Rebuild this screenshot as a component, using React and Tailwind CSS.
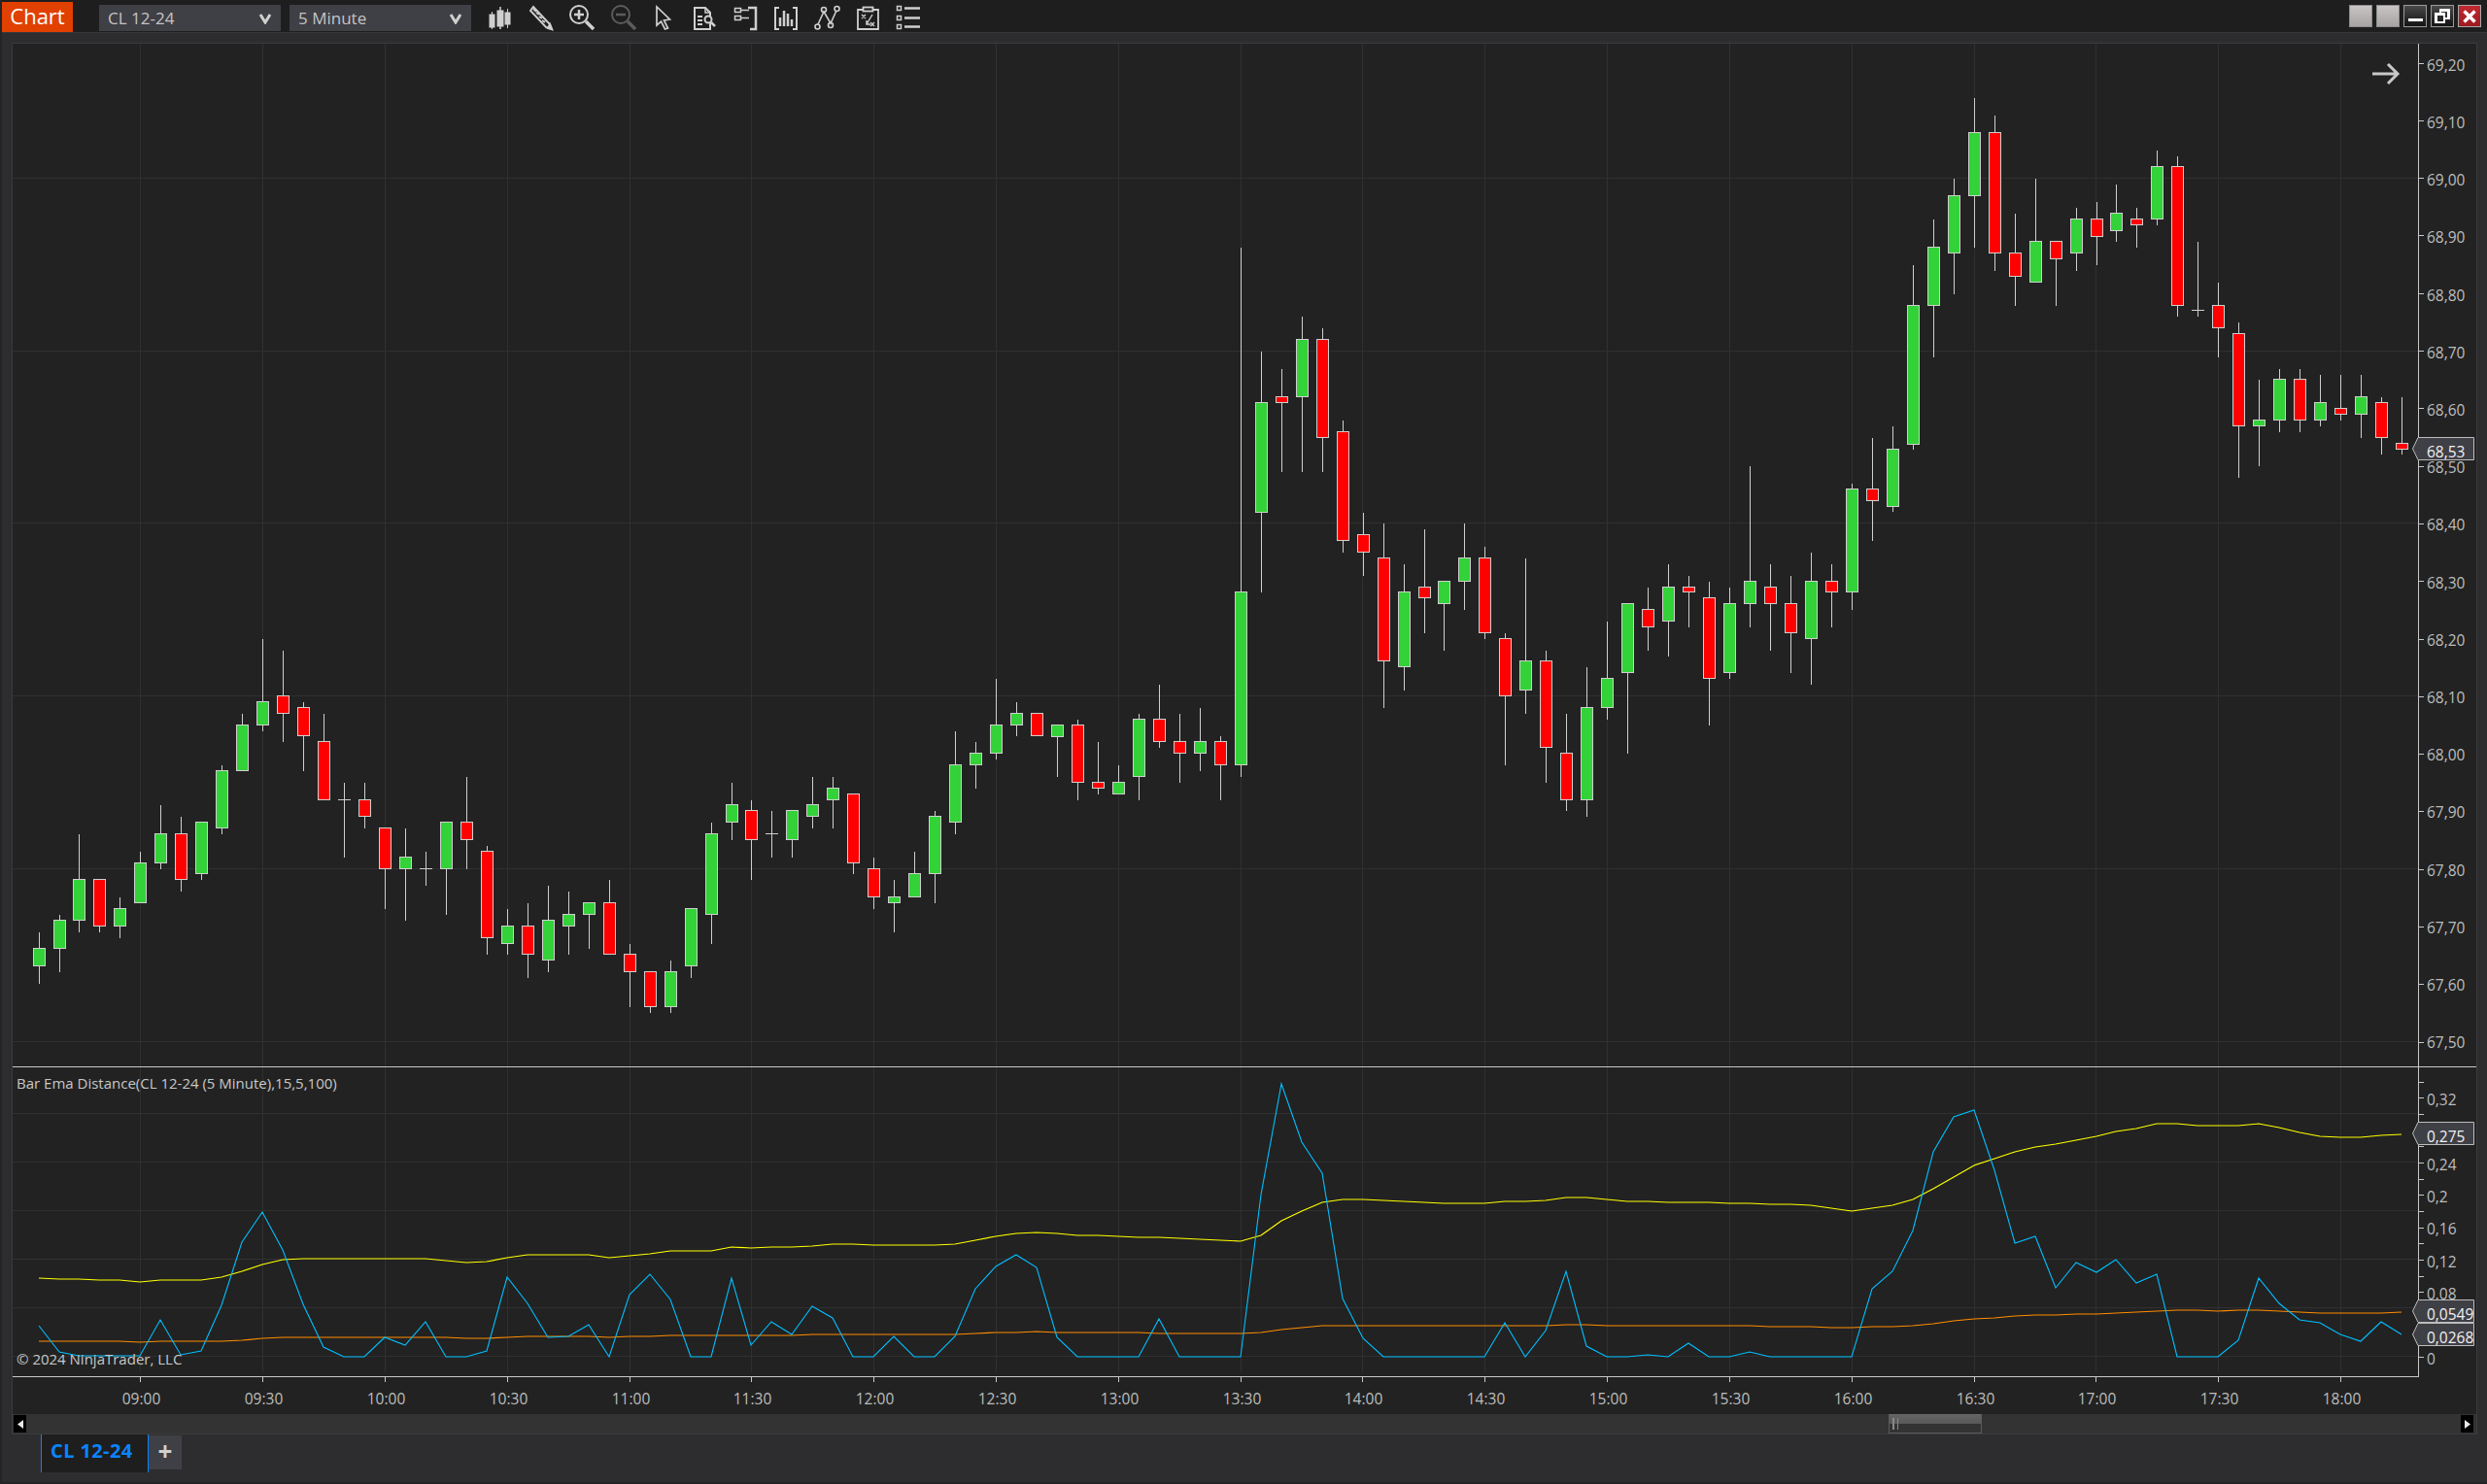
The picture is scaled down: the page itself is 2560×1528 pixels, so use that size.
import React from "react";

const GC = "#cfcfcf";
const A = [
  ["g",960,1009,1063,1118],["g",906,922,1009,1082],["g",657,796,922,960],["r",null,796,940,960],["g",852,886,940,978],
  ["g",711,745,868,null],["g",567,655,745,765],["r",603,655,796,833],["g",null,619,778,797],["g",444,460,637,657],
  ["g",285,319,460,null],["g",54,247,319,338],["r",90,229,283,372],["r",249,265,352,462],["r",285,370,550,null],
  ["d",498,550,550,728],["r",498,550,601,639],["r",null,637,763,887],["g",639,727,763,923],["d",711,763,763,815],
  ["g",null,619,763,905],["r",480,619,673,765],["r",693,709,976,1028],["g",888,940,994,1028],["r",870,940,1027,1100],
  ["g",816,922,1045,1082],["g",834,904,940,1028],["g",null,868,904,1010],["r",798,868,1027,null],["r",996,1027,1081,1190],
  ["r",null,1081,1189,1208],["g",1047,1081,1189,1208],["g",null,886,1063,1100],["g",621,655,904,995],["g",498,565,619,674],
  ["r",552,583,673,797],["d",585,655,655,728],["g",null,583,673,728],["g",480,565,601,638],["g",480,514,550,638],
  ["r",null,532,745,779],["r",729,763,850,887],["g",798,850,868,959],["g",711,778,850,null],["g",585,601,778,869],
  ["g",339,442,619,656],
].map((c) => [c[0], ...c.slice(1).map((v) => (v === null ? null : 640 + v / 3))]);
const B = [
  ["g",1092,1126,1162,1236],["g",897,1039,1126,1145],["g",969,1003,1039,1074],["r",null,1003,1072,null],["g",null,1039,1073,1200],
  ["r",1023,1039,1216,1272],["r",1092,1216,1234,1254],["g",1164,1216,1252,null],["g",1005,1021,1198,1272],["r",915,1021,1090,1110],
  ["r",1005,1090,1126,1218],["g",987,1090,1126,1182],["r",1075,1090,1162,1272],["g",-435,628,1162,1200],["g",-114,43,382,629],
  ["r",-60,25,43,258],["g",-222,-152,25,258],["r",-186,-152,151,258],["r",99,133,469,506],["r",385,451,505,578],
  ["r",417,523,841,987],["g",543,628,859,933],["r",435,613,646,756],["g",null,595,664,810],["g",417,523,595,684],
  ["r",489,523,754,773],["r",756,772,949,1164],["g",525,841,931,1005],["r",810,841,1108,1218],["r",1005,1126,1270,1305],
  ["g",861,985,1270,1323],["g",720,895,985,1023],["g",null,664,877,1128],["r",615,682,736,810],["g",543,613,718,828],
  ["r",579,613,628,738],["r",597,646,895,1041],["g",615,664,877,896],["g",240,595,664,738],["r",543,613,664,810],
  ["r",579,664,754,879],["g",507,595,772,915],["r",543,595,628,738],["g",294,310,628,684],
].map((c) => [c[0], ...c.slice(1).map((v) => (v === null ? null : 400 + v / 3))]);
const C = [
  ["r",1173,1330,1365,1491],["g",1137,1207,1384,1401],["g",639,763,1190,1208],["g",498,583,763,923],["g",372,424,601,728],
  ["g",123,229,424,585],["r",177,229,601,656],["r",480,601,673,765],["g",372,565,691,null],["r",null,565,619,765],
  ["g",462,496,601,656],["r",444,496,550,638],["g",390,478,532,567],["r",462,496,514,585],["g",285,334,496,516],
  ["r",303,334,763,797],["d",567,778,778,797],["r",693,763,832,923],["r",816,850,1135,1296],["g",993,1117,1135,1260],
  ["g",960,991,1117,1155],["r",960,991,1117,1155],["g",978,1063,1117,1136],["r",978,1081,1099,1118],["g",978,1045,1099,1172],
  ["r",1047,1063,1171,1223],["r",1047,1189,1207,1223],
].map((c) => [c[0], ...c.slice(1).map((v) => (v === null ? null : 60 + v / 3))]);
const candles = [...A, ...B, ...C];

const barX = (i) => Math.round(144.4 + 20.97 * (i - 5)) + 0.5;
const crisp = (y) => Math.round(y) + 0.5;

const BLUE = [826,906,917,918,918,919,807,915,903,762,568,474,590,760,890,920,920,862,884,812,920,920,903,675,755,861,858,822,920,730,665,745,920,920,678,884,812,853,764,802,920,920,857,920,920,857,710,643,605,645,861,920,920,920,920,805,920,920,920,920,420,78,258,355,740,865,920,920,920,920,920,920,815,920,840,657,888,920,920,914,920,878,920,920,905,920,920,920,920,920,711,658,530,288,179,158,345,570,548,708,629,660,620,692,665,920,920,920,870,678,757,806,816,852,873,812,853];
const YELLOW = [678,681,681,684,684,690,684,684,684,674,658,636,622,618,618,618,618,618,618,618,624,630,627,614,605,605,605,605,615,609,602,594,594,594,581,584,581,581,578,572,572,575,575,575,575,572,560,548,540,537,540,545,545,548,551,552,555,558,561,564,545,500,470,443,435,435,438,441,444,447,447,447,441,441,438,428,428,435,441,441,444,444,444,447,447,450,450,453,461,470,461,453,434,403,367,329,308,288,273,264,252,240,225,216,201,201,207,207,207,201,213,228,240,243,243,237,234];
const ORANGE = [873,873,873,873,873,876,873,873,873,873,870,864,861,861,861,861,861,861,861,861,861,864,864,861,858,858,858,858,861,858,858,855,855,855,855,855,855,855,852,852,852,852,852,852,852,852,849,846,846,843,846,846,846,846,846,849,849,849,849,849,846,837,831,825,825,825,825,825,825,825,825,825,825,825,825,822,822,825,825,825,825,825,825,825,825,828,828,828,831,831,829,828,825,819,810,804,800,795,793,791,789,789,786,783,780,777,777,780,777,777,779,782,786,786,786,786,783];
const path = (arr) => arr.map((v, i) => `${barX(i) - 0.5},${Math.round(1090 + v / 3)}`).join(" ");

const gridX = [144,270,396,522,648,773,899,1025,1151,1277,1402,1528,1654,1780,1906,2032,2157,2283,2409].map((x) => x + 0.5);
const times = ["09:00","09:30","10:00","10:30","11:00","11:30","12:00","12:30","13:00","13:30","14:00","14:30","15:00","15:30","16:00","16:30","17:00","17:30","18:00"];
const upperGrid = [183.5,361.5,538.5,716.5,894.5,1072.5];
const lowerGrid = [1146.5,1196.5,1246.5,1296.5,1346.5,1396.5];
const prices = ["69,20","69,10","69,00","68,90","68,80","68,70","68,60","68,50","68,40","68,30","68,20","68,10","68,00","67,90","67,80","67,70","67,60","67,50"];
const lowerLabels = [["0,32",1130],["0,24",1197],["0,2",1230],["0,16",1263],["0,12",1297],["0,08",1330],["0",1397]];
const lowerTicks = Array.from({ length: 18 }, (_, k) => 1113.5 + k * 16.67);

const FONT = "font-['Open_Sans','Noto_Sans',sans-serif]";

function Candle({ c, i }) {
  const x = barX(i);
  const [t, wt, bt, bb, wb] = c;
  const top = crisp(bt);
  const bot = crisp(bb);
  return (
    <g shapeRendering="crispEdges">
      {wt !== null && <line x1={x} x2={x} y1={Math.round(wt)} y2={top} stroke={GC} />}
      {wb !== null && <line x1={x} x2={x} y1={bot} y2={Math.round(wb)} stroke={GC} />}
      {t === "d" ? (
        <line x1={x - 6.5} x2={x + 6.5} y1={top} y2={top} stroke={GC} />
      ) : (
        <rect x={x - 6} y={top} width={12} height={Math.max(bot - top, 1)} fill={t === "g" ? "#32d238" : "#ff0000"} stroke={GC} />
      )}
    </g>
  );
}

function Tag({ top, text, w = 64 }) {
  const h = 24;
  const x0 = 2483;
  const mid = top + h / 2;
  const y1 = top + 0.5;
  const y2 = top + h - 0.5;
  const right = x0 + w - 0.5;
  return (
    <g>
      <polygon points={`${x0 + 0.5},${mid} ${x0 + 6},${y1} ${right},${y1} ${right},${y2} ${x0 + 6},${y2}`} fill="#3f3f46" stroke="#bdbdbd" />
      <text x={2498} y={mid + 8.5} className={`${FONT} text-[15.5px] fill-[#f0f0f0]`}>{text}</text>
    </g>
  );
}

const ICON = "#cfcfcf";
const icons = [
  <g key="a" fill={ICON} stroke={ICON} transform="translate(-3 0)">
    <line x1="15.5" x2="15.5" y1="12" y2="30" /><rect x="13" y="15" width="5" height="13" />
    <line x1="24" x2="24" y1="7" y2="30" strokeWidth="1.5" /><rect x="21" y="11" width="6" height="16" />
    <line x1="31.5" x2="31.5" y1="9" y2="29" /><rect x="29" y="13" width="5" height="12" />
  </g>,
  <g key="b" fill="none" stroke={ICON} strokeWidth="2">
    <path d="M10 11 L13 7 L30 25 L32 30 L26 28 Z" />
    <path d="M13 9 L16 12 M16 13 L19 15 M19 17 L22 19 M22 21 L25 23" />
    <path d="M28 29 L32 30 L30 25 Z" fill={ICON} />
  </g>,
  <g key="c" fill="none" stroke={ICON} strokeWidth="2">
    <circle cx="18" cy="15" r="9" />
    <path d="M13 15 H23 M18 10 V20" strokeWidth="2.5" />
    <path d="M25 22 L33 30" strokeWidth="3.5" />
  </g>,
  <g key="d" fill="none" stroke="#5c5c5c" strokeWidth="2">
    <circle cx="19" cy="15" r="9" />
    <path d="M14 15 H24" strokeWidth="2.5" />
    <path d="M26 22 L34 30" strokeWidth="3.5" />
  </g>,
  <g key="e" fill="none" stroke={ICON} strokeWidth="1.7">
    <path d="M14 7 L14 26 L18.5 22 L22.5 30 L25.5 29 L21.5 21 L27.5 20 Z" />
  </g>,
  <g key="f" fill="none" stroke={ICON} strokeWidth="2">
    <path d="M11 8 H22 L27 13 V30 H11 Z" />
    <path d="M22 8 V13 H27" strokeWidth="1.5" />
    <path d="M14 17 H19 M14 21 H19 M14 25 H19" />
    <circle cx="25" cy="20" r="3.5" fill="#1e1e1e" />
    <path d="M28 23 L32 27" strokeWidth="2.5" />
  </g>,
  <g key="g" fill="none" stroke={ICON} strokeWidth="2">
    <rect x="10.5" y="8.5" width="6" height="4" strokeWidth="1.5" />
    <rect x="10.5" y="16.5" width="6" height="4" strokeWidth="1.5" />
    <path d="M16 10.5 H25 M16 18.5 H25" strokeWidth="1.5" />
    <path d="M24 8 H32 V30 H26" strokeWidth="2.5" />
  </g>,
  <g key="h" fill="none" stroke={ICON} strokeWidth="2">
    <path d="M14 8 H10 V30 H14 M28 8 H32 V30 H28" />
    <path d="M15 18 V27 M19 11 V27 M23 14 V27 M27 20 V27" strokeWidth="2.5" />
  </g>,
  <g key="i" fill="none" stroke={ICON} strokeWidth="1.6">
    <path d="M12 25 L18 12 L25 24 L31 11" />
    <circle cx="11.5" cy="27.5" r="2.5" /><circle cx="18" cy="10" r="2.5" />
    <circle cx="25" cy="26" r="2.5" /><circle cx="31.5" cy="9" r="2.5" />
  </g>,
  <g key="j" fill="none" stroke={ICON} strokeWidth="1.8">
    <path d="M16 10 H11 V30 H32 V10 H27" />
    <rect x="16.5" y="7.5" width="10" height="4" />
    <path d="M15 15 L19 19 M19 15 L15 19 M24 23 L28 27 M28 23 L24 27 M26 15 L20 25 M20 21 V25 H24" strokeWidth="1.4" />
  </g>,
  <g key="k" fill="none" stroke={ICON} strokeWidth="1.5">
    <rect x="9.5" y="6.5" width="4" height="4" /><rect x="9.5" y="16.5" width="4" height="4" /><rect x="9.5" y="25.5" width="4" height="4" />
    <path d="M17 8.5 H33 M17 18.5 H33 M17 27.5 H33" strokeWidth="2.5" />
  </g>,
];

function Select({ label }) {
  return (
    <div className="w-[187px] h-[27px] mt-[4px] bg-[#3f3f46] flex items-center justify-between pl-[9px] pr-[9px]">
      <span className={`${FONT} text-[17px] text-[#c4c4c4]`}>{label}</span>
      <svg width="14" height="12" viewBox="0 0 14 12"><path d="M2 2 L7 10 L12 2" fill="none" stroke="#d0d0d0" strokeWidth="3" /></svg>
    </div>
  );
}

function WinBtn({ children, gray }) {
  return (
    <div className={`w-[24px] h-[23px] border flex items-center justify-center ${gray ? "bg-linear-to-b from-[#c8c4c4] to-[#a8a4a4] border-[#8c8c8c]" : "bg-linear-to-b from-[#4a4a4a] to-[#141414] border-[#9a9a9a]"}`}>
      {children}
    </div>
  );
}

function ScrollBtn({ dir }) {
  return (
    <div className="w-[13px] h-[18px] bg-black flex items-center justify-center">
      <svg width="6" height="9" viewBox="0 0 6 9">
        <path d={dir === "l" ? "M6 0 V9 L0 4.5 Z" : "M0 0 V9 L6 4.5 Z"} fill="#e8e8e8" />
      </svg>
    </div>
  );
}

export default function App() {
  return (
    <div className="w-[2560px] h-[1528px] flex flex-col bg-[#2d2d30] border-l-2 border-b-2 border-[#242427] overflow-hidden">
      <div className="h-[34px] shrink-0 bg-[#1e1e1e] border-b border-[#37373a] flex items-center">
        <div className={`${FONT} w-[73px] h-[31px] mt-[2px] bg-[#e04000] text-white text-[22px] leading-[29px] text-center`}>Chart</div>
        <div className="ml-[27px] mr-[9px]"><Select label="CL 12-24" /></div>
        <Select label="5 Minute" />
        <div className="ml-[9px] flex">
          {icons.map((ic, k) => (
            <svg key={k} width="42" height="33" viewBox="0 0 42 33">{ic}</svg>
          ))}
        </div>
        <div className="ml-auto mr-[6px] flex gap-[4px]">
          <WinBtn gray />
          <WinBtn gray />
          <WinBtn><div className="w-[15px] h-[3px] bg-white mt-[8px]" /></WinBtn>
          <WinBtn>
            <svg width="16" height="16" viewBox="0 0 16 16" fill="none" stroke="#fff" strokeWidth="2.2" shapeRendering="crispEdges">
              <path d="M6 5 V1.5 H14.5 V10 H11" />
              <rect x="1.5" y="5.5" width="8.5" height="8.5" />
            </svg>
          </WinBtn>
          <div className="w-[24px] h-[23px] bg-linear-to-b from-[#c02a32] to-[#9c1a20] border border-[#a8a8a8] flex items-center justify-center">
            <svg width="16" height="16" viewBox="0 0 16 16"><path d="M2.5 2.5 L13.5 13.5 M13.5 2.5 L2.5 13.5" stroke="#fff" strokeWidth="3.4" /></svg>
          </div>
        </div>
      </div>

      <div className="mt-[10px] ml-[10px] w-[2538px] shrink-0 border border-[#3b3b3f] bg-[#222222] flex flex-col">
        {/* price panel */}
        <div className="h-[1054px] flex border-b border-[#c8c8c8]">
          <svg width="2476" height="1053" viewBox="13 45 2476 1053" className="block shrink-0">
            <g stroke="#303030" shapeRendering="crispEdges">
              {gridX.map((x) => <line key={x} x1={x} x2={x} y1={45} y2={1098} />)}
              {upperGrid.map((y) => <line key={y} x1={13} x2={2489} y1={y} y2={y} />)}
            </g>
            {candles.map((c, i) => <Candle key={i} c={c} i={i} />)}
            <path d="M2442 76 H2467 M2458 66 L2468 76 L2458 86" fill="none" stroke="#c8c8c8" strokeWidth="3" />
          </svg>
          <svg width="60" height="1053" viewBox="2489 45 60 1053" className="block shrink-0 overflow-visible">
            <line x1="2489.5" x2="2489.5" y1="45" y2="1098" stroke="#c8c8c8" />
            {prices.map((p, k) => {
              const y = 64.5 + k * 59.3;
              return (
                <g key={p}>
                  <line x1="2489" x2="2495" y1={crisp(y)} y2={crisp(y)} stroke="#c8c8c8" />
                  <text x="2498" y={72.8 + k * 59.2} className={`${FONT} text-[15.5px] fill-[#bdbdbd]`}>{p}</text>
                </g>
              );
            })}
            <Tag top={450} text="68,53" />
          </svg>
        </div>

        {/* indicator panel */}
        <div className="h-[318px] flex">
          <svg width="2476" height="318" viewBox="13 1099 2476 318" className="block shrink-0">
            <g stroke="#303030" shapeRendering="crispEdges">
              {gridX.map((x) => <line key={x} x1={x} x2={x} y1={1099} y2={1413} />)}
              {lowerGrid.map((y) => <line key={y} x1={13} x2={2489} y1={y} y2={y} />)}
            </g>
            <polyline points={path(ORANGE)} fill="none" stroke="#ff8c00" strokeWidth="1.2" />
            <polyline points={path(YELLOW)} fill="none" stroke="#ffff00" strokeWidth="1.2" />
            <polyline points={path(BLUE)} fill="none" stroke="#00bfff" strokeWidth="1.1" />
            <text x="17" y="1121" className={`${FONT} text-[15px] fill-[#c8c8c8]`}>Bar Ema Distance(CL 12-24 (5 Minute),15,5,100)</text>
            <text x="17" y="1405" className={`${FONT} text-[15px] fill-[#c8c8c8]`}>© 2024 NinjaTrader, LLC</text>
          </svg>
          <svg width="60" height="318" viewBox="2489 1099 60 318" className="block shrink-0 overflow-visible">
            <line x1="2489.5" x2="2489.5" y1="1099" y2="1418" stroke="#c8c8c8" />
            {lowerTicks.map((y) => <line key={y} x1="2489" x2="2495" y1={crisp(y)} y2={crisp(y)} stroke="#c8c8c8" />)}
            {lowerLabels.map(([t, y]) => (
              <text key={t} x="2498" y={y + 8} className={`${FONT} text-[15.5px] fill-[#bdbdbd]`}>{t}</text>
            ))}
            <Tag top={1155} text="0,275" />
            <Tag top={1338} text="0,0549" />
            <Tag top={1362} text="0,0268" />
          </svg>
        </div>

        {/* time axis */}
        <svg width="2476" height="39" viewBox="13 1417 2476 39" className="block shrink-0">
          <line x1="13" x2="2490" y1="1417.5" y2="1417.5" stroke="#c8c8c8" />
          {gridX.map((x, k) => (
            <g key={x}>
              <line x1={x} x2={x} y1="1417" y2="1423" stroke="#c8c8c8" />
              <text x={x + 1} y="1446" textAnchor="middle" className={`${FONT} text-[15.5px] fill-[#bdbdbd]`}>{times[k]}</text>
            </g>
          ))}
        </svg>

        {/* scroll bar */}
        <div className="h-[20px] bg-[#333333] flex items-center justify-between px-[1px]">
          <ScrollBtn dir="l" />
          <div className="ml-[1917px] mr-auto w-[96px] h-[20px] relative flex flex-col border-x border-b border-[#5a5a5a]">
            <div className="h-[10px] bg-linear-to-b from-[#666666] to-[#585858]" />
            <div className="flex-1 bg-[#333333]" />
            <div className="absolute left-[3px] top-[4px] w-[2px] h-[12px] bg-[#8a8a8a]" />
            <div className="absolute left-[8px] top-[4px] w-[1px] h-[12px] bg-[#8a8a8a]" />
          </div>
          <div className="mr-[2px]"><ScrollBtn dir="r" /></div>
        </div>
      </div>

      {/* tab strip */}
      <div className="ml-[40px] flex items-start">
        <div className={`${FONT} w-[111px] h-[39px] pl-[9px] bg-[#1e1e1e] border-x border-[#0a84ff] text-[#0a84ff] font-bold text-[20px] tracking-[0.4px] leading-[34px]`}>CL 12-24</div>
        <div className={`${FONT} mt-[1px] w-[34px] h-[35px] bg-[#3f3f46] text-[#d0d0d0] font-bold text-[26px] leading-[33px] text-center`}>+</div>
      </div>
    </div>
  );
}
